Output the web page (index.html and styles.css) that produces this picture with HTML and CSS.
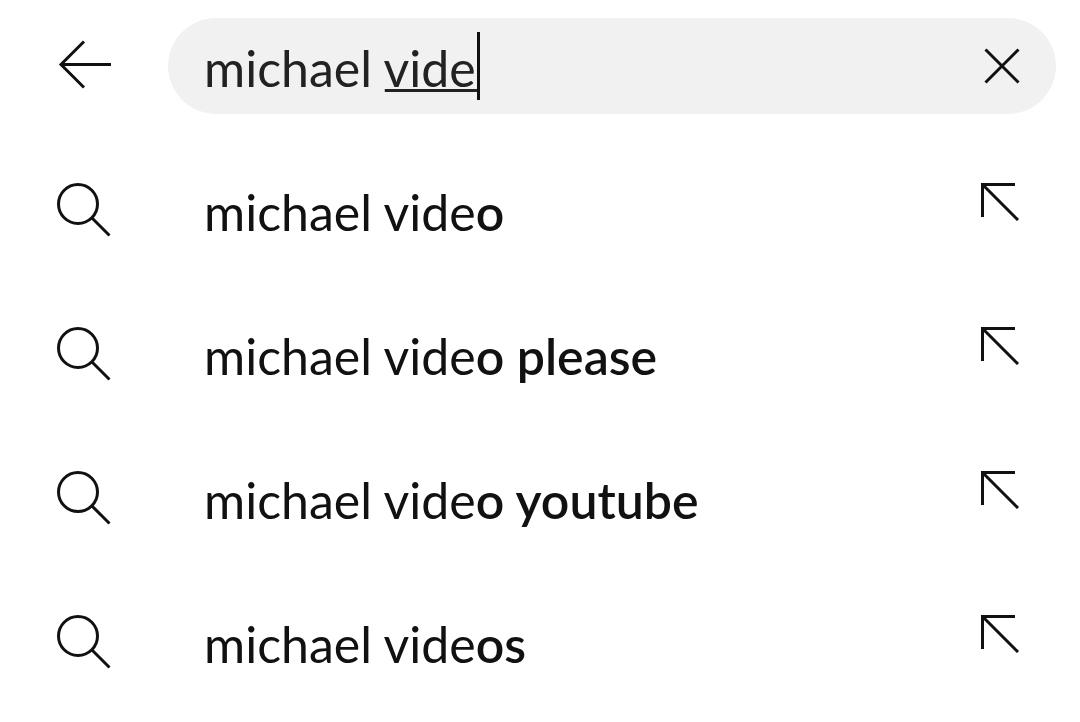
FILE: index.html
```html
<!DOCTYPE html>
<html lang="en">
	<head>
		<meta charset="UTF-8">
		<meta name="viewport" content="width=device-width, initial-scale=1">
		<title>Search</title>
		<link rel="stylesheet" href="styles.css">
	</head>
	<body>
		<svg width="0" height="0" class="sprite" aria-hidden="true">
			<symbol id="icon-search" viewBox="0 0 56 56">
				<circle cx="22" cy="22" r="19.5"/>
				<path d="M36 36L53.5 53.5"/>
			</symbol>
			<symbol id="icon-fill" viewBox="0 0 40 40">
				<path d="M2.5 36V3.5H35M3.5 4.5L38 39"/>
			</symbol>
		</svg>
		<form class="search-bar">
			<button type="button" class="back" aria-label="Back">
				<svg class="icon" viewBox="0 0 56 56"><path d="M28 3.5L5 26.5L28 49.5M5 26.5H55"/></svg>
			</button>
			<div class="search-box">
				<div class="field">
					<input type="text" class="query" aria-label="Search" value="michael vide" autocomplete="off">
					<!-- composing underline and caret -->
					<div class="composing" aria-hidden="true">michael <u>vide</u></div>
				</div>
				<button type="button" class="clear" aria-label="Clear">
					<svg class="icon-small" viewBox="0 0 40 40"><path d="M3.5 3.5L36.5 36.5M36.5 3.5L3.5 36.5"/></svg>
				</button>
			</div>
		</form>
		<ul class="suggestions">
			<li class="suggestion">
				<svg class="icon" aria-hidden="true"><use href="#icon-search"/></svg>
				<a href="#" class="text">michael vide<b>o</b></a>
				<button type="button" class="fill" aria-label="Use michael video"><svg class="icon-small"><use href="#icon-fill"/></svg></button>
			</li>
			<li class="suggestion">
				<svg class="icon" aria-hidden="true"><use href="#icon-search"/></svg>
				<a href="#" class="text">michael vide<b>o please</b></a>
				<button type="button" class="fill" aria-label="Use michael video please"><svg class="icon-small"><use href="#icon-fill"/></svg></button>
			</li>
			<li class="suggestion">
				<svg class="icon" aria-hidden="true"><use href="#icon-search"/></svg>
				<a href="#" class="text">michael vide<b>o youtube</b></a>
				<button type="button" class="fill" aria-label="Use michael video youtube"><svg class="icon-small"><use href="#icon-fill"/></svg></button>
			</li>
			<li class="suggestion">
				<svg class="icon" aria-hidden="true"><use href="#icon-search"/></svg>
				<a href="#" class="text">michael vide<b>os</b></a>
				<button type="button" class="fill" aria-label="Use michael videos"><svg class="icon-small"><use href="#icon-fill"/></svg></button>
			</li>
		</ul>
	</body>
</html>
```

FILE: styles.css
```css
*{
	padding: 0;margin: 0;box-sizing: border-box;
}
body{
	background: #fff;
	color: #111;
	font: 50px/72px Lato, "Noto Sans", sans-serif;
}
button,input{
	border: 0;background: none;
	font: inherit;color: inherit;
}
button{
	display: flex;
	cursor: pointer;
}
ul{
	list-style: none;
}
.sprite{
	display: block;
}
.icon,.icon-small{
	display: block;
	flex: none;
	fill: none;
	stroke: #111;
	stroke-width: 3;
}
.icon{
	width: 56px;height: 56px;
}
.icon-small{
	width: 40px;height: 40px;
}
.search-bar{
	display: flex;
	align-items: center;
	gap: 56px;
	padding: 18px 24px 24px 56px;
}
.search-box{
	flex: 1;
	display: flex;
	align-items: center;
	min-width: 0;
	padding: 12px 34px 12px 36px;
	border-radius: 48px;
	background: #f1f1f1;
	color: #222;
}
.field{
	position: relative;
	flex: 1;
	min-width: 0;
}
.query{
	display: block;
	width: 100%;height: 72px;
	padding-top: 4px;
	outline: none;
}
.composing{
	position: absolute;left: 0;top: 2px;
	color: transparent;
	white-space: pre;
	pointer-events: none;
}
.composing u{
	display: inline-block;
	height: 68px;
	border-right: 3px solid #111;
	text-decoration: underline 3px #222;
	text-underline-offset: 2px;
	text-decoration-skip-ink: none;
}
.suggestion{
	display: flex;
	align-items: center;
	height: 144px;
	padding: 0 60px 0 56px;
}
.text{
	flex: 1;
	margin-left: 92px;
	padding-top: 4px;
	color: inherit;
	text-decoration: none;
}
.text b{
	font-weight: 600;
}
.fill{
	padding-bottom: 18px;
}
```
